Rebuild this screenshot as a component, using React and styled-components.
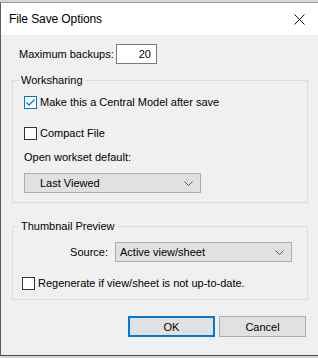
import React from 'react';
import styled, { createGlobalStyle } from 'styled-components';

const GlobalStyle = createGlobalStyle`
  html, body {
    margin: 0;
    padding: 0;
    background: #d6d6d6;
  }
  body {
    font-family: "Liberation Sans", Arial, sans-serif;
    font-size: 11px;
    color: #000;
  }
`;

const Page = styled.div`
  width: 318px;
  height: 358px;
  padding-top: 2px;
  box-sizing: border-box;
  background: #d6d6d6;
`;

const Window = styled.div`
  width: 318px;
  height: 354px;
  box-sizing: border-box;
  background: #f0f0f0;
  border-top: 1px solid #9c9c9c;
  border-left: 1px solid #5c5c5c;
  border-bottom: 1px solid #4a4a4a;
  display: flex;
  flex-direction: column;
`;

const TitleBar = styled.div`
  height: 32px;
  background: #fff;
  display: flex;
  align-items: center;
  justify-content: space-between;
  padding: 0 9px 0 8px;
  flex-shrink: 0;
`;

const Title = styled.span`
  font-size: 12px;
  letter-spacing: -0.1px;
`;

const CloseButton = styled.button`
  width: 20px;
  height: 20px;
  border: none;
  background: transparent;
  padding: 0;
  display: flex;
  align-items: center;
  justify-content: center;
`;

const Body = styled.div`
  padding: 9px 10px 0 11px;
  display: flex;
  flex-direction: column;
`;

const FieldRow = styled.div`
  display: flex;
  align-items: center;
  padding-left: ${(p) => p.$indent || 0}px;
  margin-top: ${(p) => p.$top || 0}px;
`;

const Label = styled.span`
  width: ${(p) => p.$width}px;
  text-align: ${(p) => p.$align || 'left'};
  white-space: nowrap;
  margin-right: 7px;
  flex-shrink: 0;
`;

const NumberBox = styled.div`
  width: 41px;
  height: 20px;
  box-sizing: border-box;
  border: 1px solid #7a7a7a;
  background: #fff;
  display: flex;
  align-items: center;
  justify-content: flex-end;
  padding-right: 5px;
`;

const Group = styled.fieldset`
  margin: ${(p) => p.$top}px 0 0;
  padding: 0 0 9px;
  border: 1px solid #dcdcdc;
  min-width: 0;
  display: flex;
  flex-direction: column;
`;

const Legend = styled.legend`
  margin-left: 6px;
  padding: 0 2px;
  line-height: 16px;
  font-size: 11px;
`;

const CheckRow = styled.label`
  display: flex;
  align-items: center;
  gap: 3px;
  padding-left: ${(p) => p.$indent}px;
  margin-top: ${(p) => p.$top}px;
  line-height: 13px;
  white-space: nowrap;
`;

const Box = styled.span`
  width: 13px;
  height: 13px;
  box-sizing: border-box;
  border: 1px solid ${(p) => (p.$checked ? '#0078d7' : '#333')};
  background: #fff;
  display: flex;
  align-items: center;
  justify-content: center;
  flex-shrink: 0;
`;

const Caption = styled.div`
  padding-left: 11px;
  margin-top: 9px;
  line-height: 16px;
`;

const Select = styled.div`
  width: ${(p) => p.$width}px;
  height: 20px;
  box-sizing: border-box;
  background: #e1e1e1;
  border: 1px solid #adadad;
  display: flex;
  align-items: center;
  justify-content: space-between;
  padding: 0 7px 0 ${(p) => p.$pad}px;
  margin-left: ${(p) => p.$left || 0}px;
  margin-top: ${(p) => p.$top || 0}px;
  white-space: nowrap;
`;

const Buttons = styled.div`
  display: flex;
  justify-content: flex-end;
  gap: 4px;
  margin-top: 16px;
  padding-right: 2px;
`;

const Button = styled.button`
  width: 87px;
  height: 21px;
  box-sizing: border-box;
  background: #e1e1e1;
  border: ${(p) => (p.$default ? '2px solid #0078d7' : '1px solid #adadad')};
  font-family: "Liberation Sans", Arial, sans-serif;
  font-size: 11px;
  color: #000;
  padding: 0;
`;

const Check = ({ checked }) => (
  <Box $checked={checked}>
    {checked && (
      <svg width="11" height="11" viewBox="0 0 11 11">
        <path d="M1.5 5.5 L4 8 L9.5 2.5" fill="none" stroke="#0078d7" strokeWidth="1.3" />
      </svg>
    )}
  </Box>
);

const Chevron = () => (
  <svg width="9" height="5" viewBox="0 0 9 5">
    <path d="M0.5 0.5 L4.5 4.5 L8.5 0.5" fill="none" stroke="#555" strokeWidth="1" />
  </svg>
);

export default function App() {
  return (
    <>
      <GlobalStyle />
      <Page>
        <Window>
          <TitleBar>
            <Title>File Save Options</Title>
            <CloseButton>
              <svg width="11" height="11" viewBox="0 0 11 11">
                <path d="M0.5 0.5 L10.5 10.5 M10.5 0.5 L0.5 10.5" stroke="#111" strokeWidth="1" />
              </svg>
            </CloseButton>
          </TitleBar>
          <Body>
            <FieldRow $indent={7}>
              <Label $width={90}>Maximum backups:</Label>
              <NumberBox>20</NumberBox>
            </FieldRow>

            <Group $top={8}>
              <Legend>Worksharing</Legend>
              <CheckRow $indent={11} $top={8}>
                <Check checked />
                Make this a Central Model after save
              </CheckRow>
              <CheckRow $indent={11} $top={18}>
                <Check />
                Compact File
              </CheckRow>
              <Caption>Open workset default:</Caption>
              <Select $width={177} $pad={15} $left={11} $top={8}>
                Last Viewed
                <Chevron />
              </Select>
            </Group>

            <Group $top={15}>
              <Legend>Thumbnail Preview</Legend>
              <FieldRow $top={8}>
                <Label $width={95} $align="right">Source:</Label>
                <Select $width={177} $pad={4}>
                  Active view/sheet
                  <Chevron />
                </Select>
              </FieldRow>
              <CheckRow $indent={9} $top={15}>
                <Check />
                Regenerate if view/sheet is not up-to-date.
              </CheckRow>
            </Group>

            <Buttons>
              <Button $default>OK</Button>
              <Button>Cancel</Button>
            </Buttons>
          </Body>
        </Window>
      </Page>
    </>
  );
}
